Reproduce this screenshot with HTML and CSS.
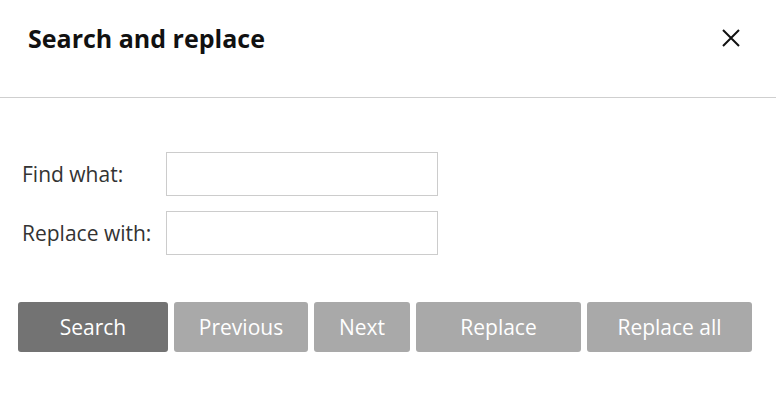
FILE: index.html
```html
<!DOCTYPE html>
<html>
<head>
<meta charset="utf-8">
<link rel="stylesheet" href="styles.css">
</head>
<body>
<div class="dialog">
  <div class="header">
    <h1 class="title">Search and replace</h1>
    <button class="close" aria-label="Close">
      <svg width="18" height="18" viewBox="0 0 18 18"><path d="M1 1L17 17M17 1L1 17" stroke="#111" stroke-width="2" fill="none"/></svg>
    </button>
  </div>
  <div class="body">
    <div class="row">
      <label class="label">Find what:</label>
      <input class="field" type="text">
    </div>
    <div class="row">
      <label class="label">Replace with:</label>
      <input class="field" type="text">
    </div>
  </div>
  <div class="actions">
    <button class="btn btn-primary w-search">Search</button>
    <button class="btn w-prev">Previous</button>
    <button class="btn w-next">Next</button>
    <button class="btn w-replace">Replace</button>
    <button class="btn w-replace">Replace all</button>
  </div>
</div>
</body>
</html>
```
FILE: styles.css
```css
* { box-sizing: border-box; }
html, body { margin: 0; padding: 0; background: #fff; }
body { font-family: "Open Sans", "Noto Sans", sans-serif; color: #222; }
.dialog { width: 776px; height: 393px; }
.header {
  height: 98px;
  border-bottom: 1px solid #cfcfcf;
  display: flex;
  align-items: flex-start;
  justify-content: space-between;
  padding: 20px 36px 0 28px;
}
.title { margin: 0; font-size: 25px; font-weight: 700; color: #111; line-height: 36px; }
.close {
  border: 0; background: none; padding: 0; margin-top: 9px;
  width: 18px; height: 18px; display: flex; cursor: pointer;
}
.body { padding: 54px 0 0 22px; display: flex; flex-direction: column; gap: 15px; }
.row { display: flex; align-items: center; }
.label { width: 144px; font-size: 21px; color: #333; }
.field {
  width: 272px; height: 44px;
  border: 1px solid #cccccc; background: #fff; outline: none;
}
.actions { display: flex; gap: 6px; padding: 47px 0 0 18px; }
.btn {
  height: 50px; border: 0; border-radius: 3px;
  background: #a9a9a9; color: #fff;
  font-family: "Open Sans", "Noto Sans", sans-serif; font-size: 21px;
  padding: 0;
}
.btn-primary { background: #737373; }
.w-search { width: 150px; }
.w-prev { width: 134px; }
.w-next { width: 96px; }
.w-replace { width: 165px; }
```
